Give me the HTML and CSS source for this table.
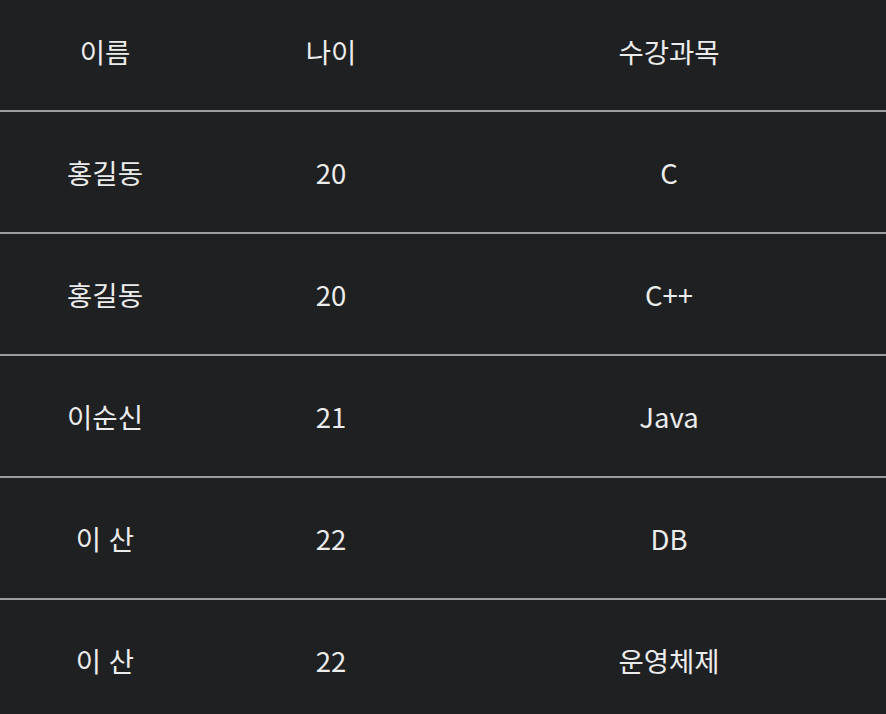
FILE: index.html
```html
<!DOCTYPE html>
<html lang="ko">
<head>
<meta charset="utf-8">
<link rel="stylesheet" href="styles.css">
</head>
<body>
<table class="grid">
  <colgroup>
    <col class="c-name"><col class="c-age"><col class="c-subj">
  </colgroup>
  <thead>
    <tr class="head"><th>이름</th><th>나이</th><th>수강과목</th></tr>
  </thead>
  <tbody>
    <tr><td>홍길동</td><td>20</td><td>C</td></tr>
    <tr><td>홍길동</td><td>20</td><td>C++</td></tr>
    <tr><td>이순신</td><td>21</td><td>Java</td></tr>
    <tr><td>이 산</td><td>22</td><td>DB</td></tr>
    <tr><td>이 산</td><td>22</td><td>운영체제</td></tr>
  </tbody>
</table>
</body>
</html>
```
FILE: styles.css
```css
html, body {
  margin: 0;
  padding: 0;
  background: #1f2022;
}
.grid {
  width: 886px;
  border-collapse: collapse;
  table-layout: fixed;
  font-family: "Noto Sans CJK KR", "Noto Sans", sans-serif;
  font-size: 27.5px;
  color: #ececec;
}
.c-name { width: 210px; }
.c-age { width: 242px; }
.c-subj { width: 434px; }
.grid th, .grid td {
  text-align: center;
  font-weight: 400;
  padding: 0;
  height: 120px;
  border-bottom: 2px solid #9c9da1;
}
.grid .head th {
  height: 102px;
  padding-bottom: 8px;
}
.grid tbody tr:last-child td {
  border-bottom: none;
}
```
